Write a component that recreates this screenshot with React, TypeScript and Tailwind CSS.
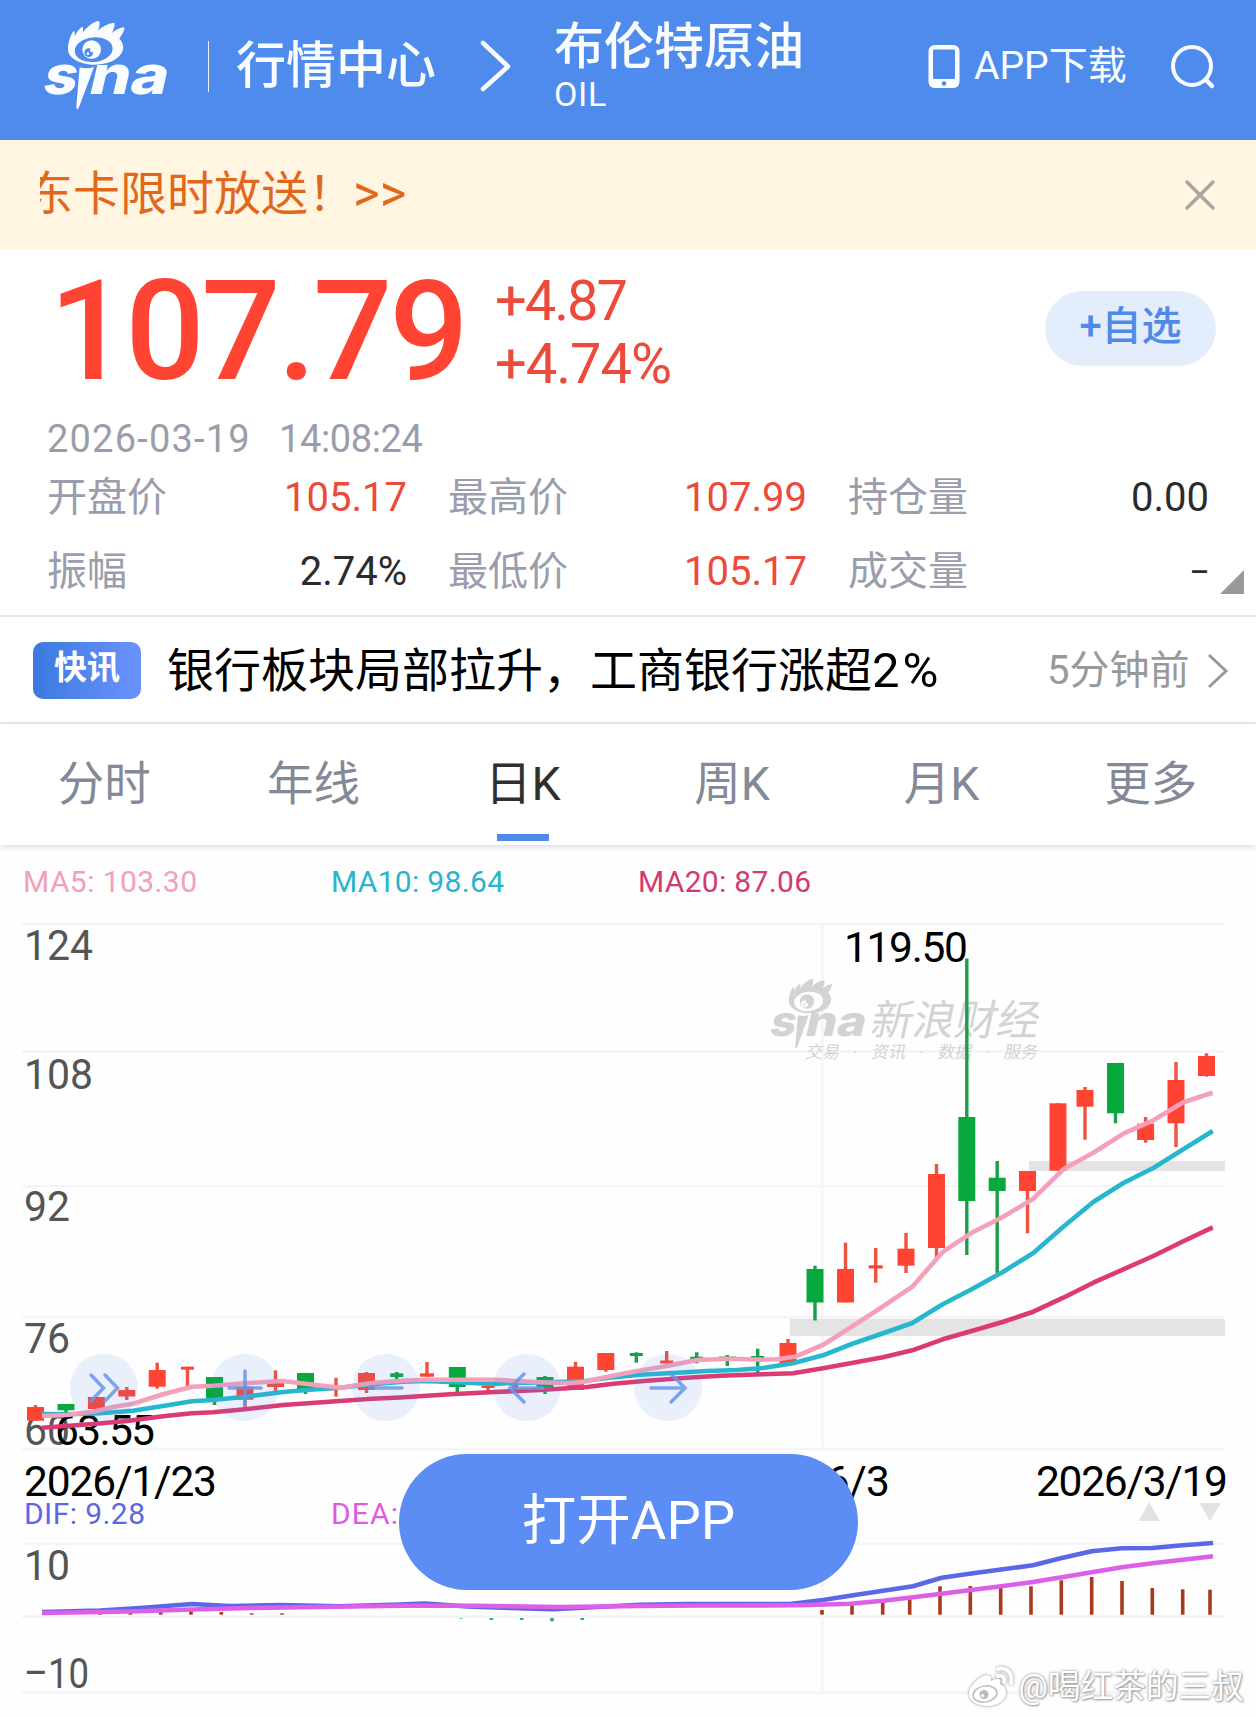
/**
 * Futures quote page
 * Brent crude header, price panel, news ticker and daily K chart with MACD
 */

import React, { useState } from 'react';
import clsx from 'clsx';

// Types
interface Candle {
  x: number;
  up: boolean;
  top: number;
  bottom: number;
  high: number;
  low: number;
  width?: number;
}

interface Stat {
  label: string;
  value: string;
  rising?: boolean;
}

const stats: Stat[] = [
  { label: '开盘价', value: '105.17', rising: true },
  { label: '最高价', value: '107.99', rising: true },
  { label: '持仓量', value: '0.00' },
  { label: '振幅', value: '2.74%' },
  { label: '最低价', value: '105.17', rising: true },
  { label: '成交量', value: '–' },
];

const tabs = ['分时', '年线', '日K', '周K', '月K', '更多'];

const candles: Candle[] = [
  { x: 35.5, up: true, top: 1407, bottom: 1420.7, high: 1405, low: 1420.7 },
  { x: 66, up: false, top: 1404, bottom: 1410.3, high: 1404, low: 1412.7 },
  { x: 96.4, up: true, top: 1397, bottom: 1409, high: 1397, low: 1409 },
  { x: 126.8, up: true, top: 1390, bottom: 1396.5, high: 1387, low: 1400 },
  { x: 157.2, up: true, top: 1370, bottom: 1386.7, high: 1362.7, low: 1388.7 },
  { x: 187.5, up: true, top: 1366.7, bottom: 1369.7, high: 1366.7, low: 1386.7, width: 13 },
  { x: 214.5, up: false, top: 1377, bottom: 1398.3, high: 1377, low: 1405 },
  { x: 245, up: true, top: 1386.7, bottom: 1399.7, high: 1383, low: 1407 },
  { x: 275.5, up: true, top: 1383, bottom: 1387, high: 1370.3, low: 1391.3 },
  { x: 305.5, up: false, top: 1373, bottom: 1390, high: 1373, low: 1394 },
  { x: 336, up: true, top: 1386.5, bottom: 1389.5, high: 1377.7, low: 1396.7, width: 13 },
  { x: 366.5, up: true, top: 1373, bottom: 1390, high: 1372, low: 1393 },
  { x: 396.7, up: false, top: 1373.3, bottom: 1377, high: 1372, low: 1379, width: 13 },
  { x: 427, up: true, top: 1373.3, bottom: 1376.7, high: 1362, low: 1376.7, width: 14 },
  { x: 457.3, up: false, top: 1367, bottom: 1387, high: 1367, low: 1392 },
  { x: 488, up: true, top: 1385.5, bottom: 1388, high: 1385.5, low: 1391, width: 13 },
  { x: 515, up: true, top: 1385, bottom: 1388, high: 1383, low: 1389, width: 6 },
  { x: 545, up: false, top: 1377, bottom: 1387.3, high: 1376, low: 1394 },
  { x: 575.5, up: true, top: 1366.7, bottom: 1390, high: 1362, low: 1390 },
  { x: 605.8, up: true, top: 1353, bottom: 1370, high: 1353, low: 1371.7 },
  { x: 636.3, up: false, top: 1353, bottom: 1356, high: 1352.3, low: 1362.7, width: 13 },
  { x: 666.7, up: true, top: 1360.5, bottom: 1363.5, high: 1351, low: 1363.5, width: 13 },
  { x: 696.7, up: false, top: 1356.7, bottom: 1359.5, high: 1352.3, low: 1363.3, width: 13 },
  { x: 727.3, up: false, top: 1356.5, bottom: 1361, high: 1355, low: 1366 },
  { x: 757.7, up: false, top: 1356, bottom: 1358.5, high: 1348.7, low: 1374, width: 13 },
  { x: 788, up: true, top: 1343, bottom: 1363, high: 1339, low: 1363 },
  { x: 815, up: false, top: 1269, bottom: 1302.5, high: 1265.7, low: 1320.5 },
  { x: 845.5, up: true, top: 1269, bottom: 1302.5, high: 1242.7, low: 1302.5 },
  { x: 875.7, up: true, top: 1265.3, bottom: 1268.5, high: 1248, low: 1282.7, width: 14 },
  { x: 906, up: true, top: 1248.7, bottom: 1265.7, high: 1233, low: 1273 },
  { x: 936.5, up: true, top: 1174, bottom: 1248, high: 1164, low: 1257 },
  { x: 966.8, up: false, top: 1117, bottom: 1201, high: 958.5, low: 1255 },
  { x: 997.2, up: false, top: 1177.7, bottom: 1191, high: 1161, low: 1273 },
  { x: 1027.5, up: true, top: 1171, bottom: 1191, high: 1171, low: 1233.3 },
  { x: 1058, up: true, top: 1103.3, bottom: 1170.7, high: 1103.3, low: 1170.7 },
  { x: 1085, up: true, top: 1090, bottom: 1106.7, high: 1087, low: 1139.7 },
  { x: 1115.5, up: false, top: 1063, bottom: 1113.3, high: 1063, low: 1123.3 },
  { x: 1145.6, up: true, top: 1123.7, bottom: 1140, high: 1117, low: 1142.7 },
  { x: 1176, up: true, top: 1080, bottom: 1123.3, high: 1062, low: 1147 },
  { x: 1206.5, up: true, top: 1056, bottom: 1076, high: 1053.3, low: 1076.7 },
];

const ma5 =
  '42,1416 67,1415 93,1411.7 113,1407 133,1403.7 163,1394.3 192,1386.7 213,1385.7 245,1383.3 282,1381 310,1384.3 340,1387.7 372,1383 403,1380.7 425,1379.7 495,1379.7 540,1382.3 567,1383.3 583,1382 600,1378.3 633,1371.7 667,1366 697,1360 730,1358.7 763,1359.7 777,1359.3 796,1356.4 823.3,1344.7 851.7,1326.7 881.7,1307.3 912.3,1286.7 942.7,1252 971.7,1232.7 1003.3,1216.7 1033.3,1198.7 1063.3,1169.3 1093.3,1152.7 1123.3,1133.7 1153.3,1120.3 1183.3,1102.3 1212.7,1092.7';
const ma10 =
  '42,1414 67,1414.3 100,1413.3 133,1410.7 163,1406 192,1401.3 213,1400 245,1396.7 283,1392 310,1389.7 340,1387.7 372,1384.3 403,1381.7 425,1381 467,1382.7 495,1384 510,1383 553,1382.3 587,1380.7 607,1378 640,1374.7 677,1372.7 707,1371 737,1370 763,1368 793,1363.3 823,1355.3 851.7,1344 881.7,1333.7 912.3,1323 942.7,1304.3 971.7,1289.3 1003.3,1271.7 1033.3,1253 1063.3,1226.7 1093.3,1202 1123.3,1183 1153.3,1168 1183.3,1149.3 1212.7,1131';
const ma20 =
  '42,1427.7 93,1424 127,1421 163,1416.3 192,1413.3 213,1412.3 245,1409.3 283,1405 340,1401 372,1398.7 400,1397.5 450,1394.3 495,1392 540,1390 587,1387 613,1383.7 647,1380.7 687,1377.7 720,1375.7 763,1374.3 793,1373.3 823,1368.3 851.7,1363 883,1357.3 912.3,1350.3 942.7,1339.3 971.7,1331 1003.3,1321.7 1033.3,1311.7 1063.3,1297.7 1093.3,1282.7 1153.3,1256 1183.3,1241.3 1212.7,1227.3';
const dif =
  '42,1612 100,1610.5 140,1608 192,1604 230,1606 280,1605 340,1606.3 400,1604.5 425,1603.5 467,1606.5 510,1608 553,1609.2 587,1607.5 640,1604.7 687,1604 790,1604 823,1600 850,1595.7 883,1590.7 913,1586.3 941.7,1577.7 973,1573.3 1003,1569.3 1033,1565.3 1061.7,1558 1091.7,1551.3 1121.7,1548.3 1152.3,1548 1182.7,1545.3 1213,1543';
const dea =
  '42,1613 130,1611.5 192,1609.5 250,1608 350,1606.5 400,1605.7 475,1605.7 560,1607 640,1606 700,1605.5 800,1605.3 850,1603.7 883,1600.7 913,1597.3 941.7,1593.7 973,1589.7 1003,1586 1033,1582 1061.7,1577.3 1091.7,1572.3 1121.7,1567.3 1152.3,1563.3 1182.7,1559.7 1213,1556.3';

// [x, top] of every MACD bar above the zero line
const macdUp = [
  [100, 1613.3], [130.3, 1612], [160.7, 1609.3], [191, 1608], [221.3, 1612], [251.7, 1613.3], [282, 1613.3],
  [822, 1610], [852, 1603.3], [882.7, 1599.3], [909.7, 1596], [940, 1586.3], [970.3, 1586], [1000.7, 1586],
  [1031, 1586.3], [1061.3, 1580.3], [1091.7, 1577], [1122, 1581], [1152.3, 1588], [1182.7, 1589.3], [1210, 1589.7],
];
const macdDown = [
  [461, 1618.6], [491.3, 1620], [521.7, 1620], [552, 1621.3], [582.3, 1620],
];

const axis = [
  { label: '124', y: 960, length: 69 },
  { label: '108', y: 1089, length: 69 },
  { label: '92', y: 1221, length: 46 },
  { label: '76', y: 1353, length: 46 },
  { label: '60', y: 1445, length: 46 },
  { label: '10', y: 1580, length: 46 },
  { label: '–10', y: 1688, length: 65 },
];

// Sina eye logo, the backdrop colour fills the white of the eye
const SinaLogo: React.FC<{ color: string; backdrop: string } & React.SVGProps<SVGSVGElement>> = ({
  color,
  backdrop,
  ...props
}) => (
  <svg viewBox="0 0 420 306" fill={color} {...props}>
    <path d="M96 108C95 88 103 64 112 52Q118 50 116 68Q124 48 138 38Q144 38 140 56Q158 30 186 20Q196 22 186 50Q206 30 234 26Q240 30 228 56Q246 42 264 40Q270 44 250 74C264 88 266 108 252 124C236 144 200 154 166 152C126 148 98 132 96 108Z" />
    <ellipse cx="173" cy="107" rx="57" ry="37" fill={backdrop} transform="rotate(-6 173 107)" />
    <circle cx="167" cy="107" r="28" />
    <circle cx="158" cy="116" r="13" fill={backdrop} />
    <circle cx="168" cy="109" r="6" />
    <circle cx="156" cy="119" r="4" />
    <path d="M131 160Q152 166 174 159L129 280Q122 294 121 276Z" />
    <g fontSize="160" className="font-[Inter,sans-serif] font-extrabold">
      <text transform="translate(15 239) skewX(-13)" textLength="101" lengthAdjust="spacingAndGlyphs">
        s
      </text>
      <text transform="translate(153 239) skewX(-13)" textLength="236" lengthAdjust="spacingAndGlyphs">
        na
      </text>
    </g>
  </svg>
);

const Header: React.FC = () => (
  <header className="flex h-[140px] items-start bg-[#4f8bed] text-[#fafdff]">
    <SinaLogo color="#fafdff" backdrop="#4f8bed" className="mt-[14px] ml-9 h-[102px] w-[140px] shrink-0" />
    <div className="mt-[41px] ml-8 h-[51px] w-px bg-white/90" />
    <div className="mt-10 ml-[27px] text-[50px] leading-[52px] font-medium">行情中心</div>
    <svg className="mt-[39px] ml-[44px] h-14 w-8" viewBox="0 0 32 56" fill="none" stroke="currentColor" strokeWidth="4.5" strokeLinecap="round" strokeLinejoin="round">
      <path d="M3 4L28 27.5L3 50" />
    </svg>
    <div className="mt-[22px] ml-[42px] w-[373px]">
      <div className="text-[50px] leading-[50px] font-medium">布伦特原油</div>
      <div className="mt-1 text-[34px] leading-9 tracking-[0.7px]">OIL</div>
    </div>
    <svg className="mt-11 h-[45px] w-[33px]" viewBox="0 0 33 45">
      <rect x="1.5" y="1" width="31" height="43" rx="6" fill="currentColor" />
      <rect x="6" y="5.5" width="22" height="29.5" rx="1" fill="#4f8bed" />
      <circle cx="17" cy="39.5" r="2.3" fill="#4f8bed" />
    </svg>
    <div className="mt-[46px] ml-3.5 w-[160px] text-[39px] leading-10 whitespace-nowrap">APP下载</div>
    <svg className="mt-[43px] ml-9 h-12 w-12" viewBox="0 0 48 48" fill="none" stroke="currentColor" strokeWidth="4">
      <circle cx="22" cy="23" r="19" />
      <path d="M35.500 36.500L42 43" strokeLinecap="round" strokeWidth="4.500" />
    </svg>
  </header>
);

const Quote: React.FC = () => (
  <section className="relative h-[368px] border-b-2 border-[#e8e8ec] bg-white">
    <div className="flex">
      <div className="mt-[4px] ml-[49px] w-[446px] text-[140px] leading-[156px] font-medium tracking-[-3.400px] text-[#ff4433]">107.79</div>
      <div className="mt-[21px] w-[550px] text-[56px] leading-[63px] text-[#ec4a3b]">
        <div className="tracking-[-2px]">+4.87</div>
        <div className="tracking-[-1px]">+4.74%</div>
      </div>
      <button className="mt-[42px] h-[75px] w-[171px] rounded-full bg-[#e3edfc] pb-1 text-[40px] leading-[70px] font-medium text-[#4f8ae6]">
        +自选
      </button>
    </div>
    <div className="mt-[11px] ml-[47px] flex text-[38px] leading-[38px] text-[#9a9dab]">
      <span className="w-[232px] tracking-[1.200px]">2026-03-19</span>
      <span className="tracking-[-0.400px]">14:08:24</span>
    </div>
    <div className="mt-[3px] ml-[47px] grid grid-cols-[401px_400px_361px] text-[40px] leading-[74px]">
      {stats.map(stat => (
        <div key={stat.label} className="flex justify-between pr-[41px] last:pr-0 nth-3:pr-0">
          <span className="text-[#9a9dab]">{stat.label}</span>
          <span
            className={clsx(
              stat.rising ? 'text-[#ec4a3b]' : 'text-[#2b2b2b]',
              stat.value === '–' && 'text-[30px] font-medium'
            )}
          >
            {stat.value}
          </span>
        </div>
      ))}
    </div>
    <svg className="absolute right-3 bottom-[21px] h-6 w-6" viewBox="0 0 24 24">
      <path d="M24 0V24H0Z" fill="#999" />
    </svg>
  </section>
);

const NewsBar: React.FC = () => (
  <section className="flex h-[107px] items-center border-b-2 border-[#e6e8f0] bg-white pt-0.5 pl-[33px]">
    <span className="h-[57px] w-[108px] rounded-[10px] bg-linear-to-r from-[#3a7ae0] to-[#6b92fb] text-center text-[33px] leading-[52px] font-bold text-white">
      快讯
    </span>
    <span className="ml-[26px] w-[881px] text-[47px] leading-[60px] text-black">
      银行板块局部拉升，工商银行涨超<span className="text-[49px] tracking-[3px]">2%</span>
    </span>
    <span className="-ml-px w-[159px] text-[40px] leading-[60px] text-[#999]">5分钟前</span>
    <svg className="h-9 w-6" viewBox="0 0 24 36" fill="none" stroke="#999" strokeWidth="3">
      <path d="M3 2L20 18L3 34" />
    </svg>
  </section>
);

const Tabs: React.FC = () => {
  const [active, setActive] = useState('日K');

  return (
    <nav className="relative z-10 grid h-[121px] grid-cols-6 bg-white shadow-[0_2px_5px_rgba(80,80,150,0.2)]">
      {tabs.map(tab => (
        <button
          key={tab}
          onClick={() => setActive(tab)}
          className={clsx(
            'flex flex-col items-center pt-[30px] pr-px text-[46.500px] leading-[60px]',
            active === tab ? 'text-[#2f2f2f]' : 'text-[#838997]'
          )}
        >
          {tab}
          {active === tab && <span className="mt-[20px] h-[7px] w-[52px] bg-[#4f8ae6]" />}
        </button>
      ))}
    </nav>
  );
};

const Chart: React.FC = () => (
  <svg className="block h-[872px] w-[1256px]" viewBox="0 845 1256 872">
    {/* Grid */}
    <g stroke="#f3f5f8" strokeWidth="2.6">
      {[923.7, 1051.6, 1186.3, 1317.5, 1449, 1543.7, 1616.5, 1692.5].map(y => (
        <line key={y} x1="22" x2="1224" y1={y} y2={y} />
      ))}
      <path d="M822.300 924V1449M822.300 1543V1692" />
    </g>

    {/* Watermark */}
    <SinaLogo color="#d3d3d3" backdrop="#fefefe" x="764.5" y="973.5" width="107" height="80" preserveAspectRatio="none" />
    <g fill="#d3d3d3" transform="translate(869 1035) skewX(-12)">
      <text fontSize="42" textLength="168">新浪财经</text>
      <g fontSize="17" transform="translate(1 23)">
        <text x="-60">交易</text>
        <text x="-13">·</text>
        <text x="6">资讯</text>
        <text x="53">·</text>
        <text x="72">数据</text>
        <text x="119">·</text>
        <text x="138">服务</text>
      </g>
    </g>

    {/* Gap bands */}
    <g fill="#e4e4e4">
      <rect x="1029" y="1161" width="196" height="10" />
      <rect x="790" y="1319" width="435" height="17" />
    </g>

    {/* Axis labels */}
    <g fill="#555" fontSize="42">
      {axis.map(({ label, y, length }) => (
        <text key={label} x="24" y={y} textLength={length} lengthAdjust="spacingAndGlyphs">{label}</text>
      ))}
    </g>

    {/* Extremes and dates */}
    <g fontSize="42.500" fill="#000">
      <text x="55" y="1445" textLength="100">63.55</text>
      <text x="844" y="962" textLength="124">119.50</text>
      <text x="24" y="1496" textLength="193">2026/1/23</text>
      <text x="823" y="1496" textAnchor="middle" textLength="134">2026/3</text>
      <text x="1036" y="1496" textLength="192">2026/3/19</text>
    </g>

    {/* Candles */}
    {candles.map(({ x, up, top, bottom, high, low, width = 17 }) => (
      <g key={x} fill={up ? '#ff4433' : '#07a83c'}>
        <rect x={x - 1.7} y={high} width="3.4" height={low - high} fill={up ? '#ee5340' : '#1b9e48'} />
        <rect x={x - width / 2} y={top} width={width} height={bottom - top} />
      </g>
    ))}

    {/* Moving averages */}
    <g fill="none" strokeWidth="4.600" strokeLinejoin="round">
      <polyline points={ma10} stroke="#26b7cf" />
      <polyline points={ma20} stroke="#dc3a74" />
      <polyline points={ma5} stroke="#f5a0ba" />
    </g>

    {/* MACD */}
    {macdUp.map(([x, top]) => (
      <rect key={x} x={x - 1.8} y={top} width="3.6" height={1614.7 - top} fill="#a8391f" />
    ))}
    {macdDown.map(([x, bottom]) => (
      <rect key={x} x={x - 1.8} y={1618} width="3.6" height={bottom - 1618} fill="#2fae7a" />
    ))}
    <g fill="none" strokeWidth="4.600" strokeLinejoin="round">
      <polyline points={dif} stroke="#5a68e8" />
      <polyline points={dea} stroke="#dd5fe8" />
    </g>

    {/* Legends */}
    <g fontSize="30">
      <text x="23" y="892" textLength="174" fill="#f2a0b9">MA5: 103.30</text>
      <text x="331" y="892" textLength="173" fill="#28b5cc">MA10: 98.64</text>
      <text x="638" y="892" textLength="173" fill="#d33b70">MA20: 87.06</text>
      <text x="24" y="1524" textLength="121" fill="#5b68e0">DIF: 9.28</text>
      <text x="331" y="1524" textLength="67" fill="#dc5be0">DEA:</text>
    </g>

    <path d="M1138.700 1521L1149.200 1502L1159.700 1521ZM1199.300 1503H1220.700L1210 1521Z" fill="#e2e2e2" />
  </svg>
);

const controls = [
  'M21 21L33.500 34L21 47M35 21L47.500 34L35 47',
  'M34 17V51M18 34H50',
  'M18 34H50',
  'M50 34H17M31 20L17 34L31 48',
  'M17 34H50M37 20L51 34L37 48',
];

const ChartControls: React.FC = () => (
  <div className="absolute top-[509px] left-[70px] flex gap-[73px]">
    {controls.map(d => (
      <button key={d} className="h-[67px] w-[68px] rounded-full bg-[#4f8bed]/12">
        <svg viewBox="0 0 68 68" fill="none" stroke="#6a95e8" strokeOpacity="0.85" strokeWidth="3.500" strokeLinecap="round">
          <path d={d} />
        </svg>
      </button>
    ))}
  </div>
);

const AuthorMark: React.FC = () => (
  <div className="absolute right-3 bottom-2 flex items-center text-white [text-shadow:0_0_3px_#888,1px_1px_2px_#aaa]">
    <svg className="mr-0.5 h-[44px] w-[50px] drop-shadow-[0_0_1.5px_#888]" viewBox="0 0 50 44">
      <path d="M33 19C35 14 31 12 24 16C25 11 21 8 14 12C7 17 2 23 2 29C2 36 10 41 20 41C31 41 39 35 39 28C39 23 36 20 33 19Z" fill="#fff" />
      <ellipse cx="18" cy="29" rx="12" ry="8" fill="#fff" stroke="#bbb" strokeWidth="1.500" transform="rotate(-10 18 29)" />
      <circle cx="17" cy="29.500" r="4.500" fill="#bbb" />
      <circle cx="15.500" cy="30.500" r="1.500" fill="#fff" />
      <path d="M31 4C40 2 46 8 44 18M31 11C36 10 38 13 37 17" fill="none" stroke="#fff" strokeWidth="4" strokeLinecap="round" />
    </svg>
    <span className="text-[32.700px] leading-[44px]">@喝红茶的三叔</span>
  </div>
);

export default function App() {
  const [showBanner, setShowBanner] = useState(true);

  return (
    <div className="h-[1717px] w-[1256px] overflow-hidden bg-[#fefefe] font-[Roboto,'Noto_Sans_CJK_SC',sans-serif]">
      <Header />
      {showBanner && (
        <div className="flex h-[109px] items-center justify-between bg-[#fff5e1] pr-10 pl-10">
          <div className="flex overflow-hidden pb-0.5 text-[47px] leading-[60px] whitespace-pre text-[#e0681a]">
            <span className="-ml-3.5">东卡限时放送！</span>
            <span className="ml-[-2px] text-[51px]">&gt;&gt;</span>
          </div>
          <button onClick={() => setShowBanner(false)}>
            <svg className="h-8 w-8" viewBox="0 0 32 32" stroke="#a9a6a0" strokeWidth="3.500" strokeLinecap="round">
              <path d="M3 3L29 29M29 3L3 29" />
            </svg>
          </button>
        </div>
      )}
      <Quote />
      <NewsBar />
      <Tabs />
      <div className="relative">
        <Chart />
        <ChartControls />
        <button className="absolute top-[609px] left-[399px] h-[136px] w-[459px] rounded-full bg-[#5c8df5] pb-[3px] text-[54.500px] text-white">
          打开APP
        </button>
        <AuthorMark />
      </div>
    </div>
  );
}
